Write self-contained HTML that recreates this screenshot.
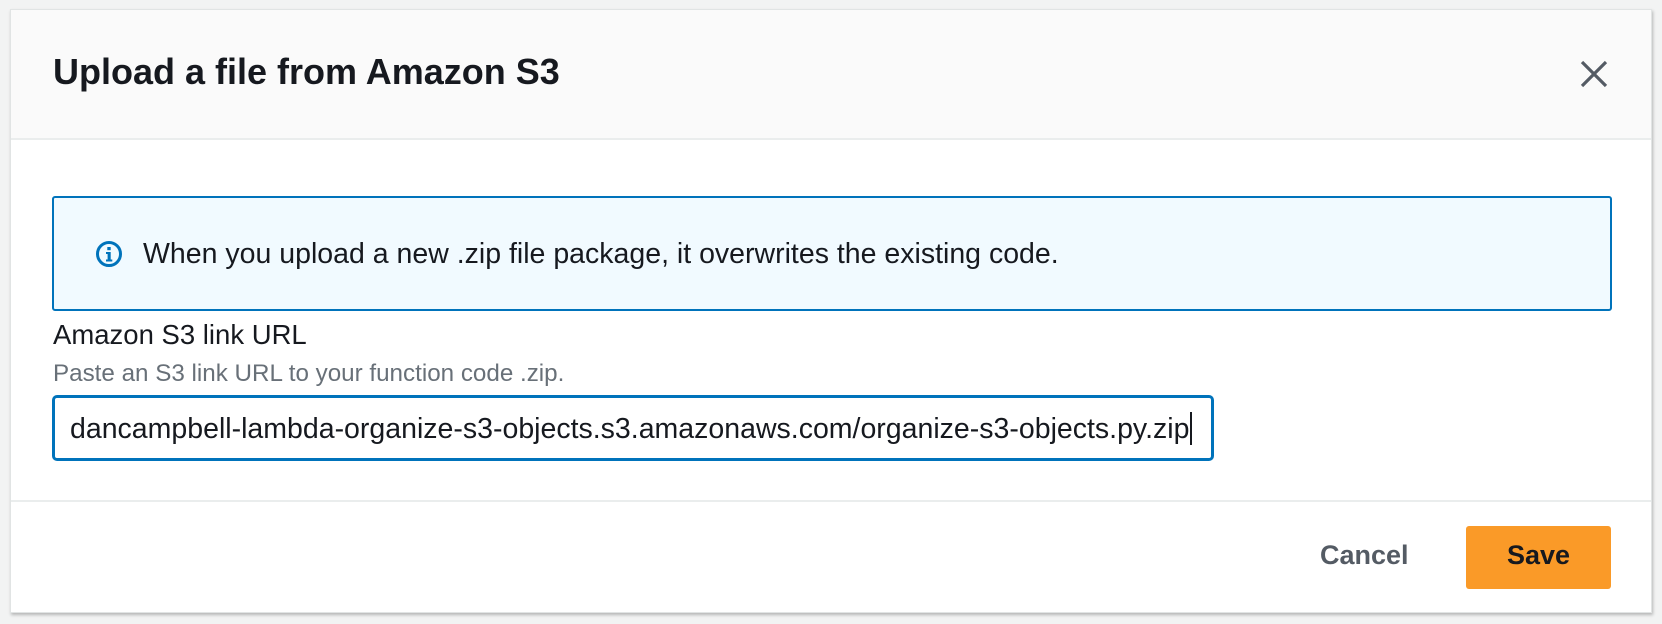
<!DOCTYPE html>
<html><head><meta charset="utf-8"><style>
html,body{margin:0;padding:0;width:1662px;height:624px;overflow:hidden;background:#f2f3f3;font-family:"Liberation Sans",sans-serif;}
.modal{position:absolute;left:10px;top:9px;width:1642px;height:604px;background:#fff;border:1px solid #e1e4e4;box-shadow:1px 2px 3px rgba(0,0,0,0.25);box-sizing:border-box;}
.hdr{position:absolute;left:0;top:0;right:0;height:128px;background:#fafafa;border-bottom:2px solid #eaeded;}
.t{position:absolute;white-space:nowrap;}
</style></head><body>
<div class="modal">
  <div class="hdr"></div>
  <div class="t" style="left:42px;top:41px;font-size:36px;font-weight:bold;color:#16191f;">Upload a file from Amazon S3</div>
  <svg style="position:absolute;left:1569px;top:50px" width="28" height="28" viewBox="0 0 28 28"><path d="M2 2L26 26M26 2L2 26" stroke="#545b64" stroke-width="3.2" fill="none"/></svg>
  <div style="position:absolute;left:41px;top:186px;width:1560px;height:115px;box-sizing:border-box;border:2px solid #0073bb;border-radius:3px;background:#f1faff;"></div>
  <svg style="position:absolute;left:84px;top:230px" width="28" height="28" viewBox="0 0 28 28"><circle cx="14" cy="14" r="11.5" stroke="#0073bb" stroke-width="3" fill="none"/><rect x="12.3" y="7" width="3.4" height="3.2" fill="#0073bb"/><path d="M11 12h4.7v7.5h1.6v2h-6.3v-2h1.6v-5.5h-1.6z" fill="#0073bb"/></svg>
  <div class="t" style="left:132px;top:228px;font-size:28.5px;color:#16191f;">When you upload a new .zip file package, it overwrites the existing code.</div>
  <div class="t" style="left:42px;top:309px;font-size:27.5px;color:#16191f;">Amazon S3 link URL</div>
  <div class="t" style="left:42px;top:350px;font-size:24.2px;color:#687078;">Paste an S3 link URL to your function code .zip.</div>
  <div style="position:absolute;left:41px;top:385px;width:1162px;height:66px;box-sizing:border-box;border:3px solid #0073bb;border-radius:5px;"></div>
  <div class="t" style="left:59px;top:402px;font-size:28.5px;color:#16191f;">dancampbell-lambda-organize-s3-objects.s3.amazonaws.com/organize-s3-objects.py.zip<span style="display:inline-block;width:1.5px;height:33px;background:#16191f;vertical-align:-7px;margin-left:1px"></span></div>
  <div style="position:absolute;left:0;right:0;top:490px;height:2px;background:#eaeded;"></div>
  <div class="t" style="left:1309px;top:530px;font-size:27px;font-weight:bold;color:#545b64;">Cancel</div>
  <div style="position:absolute;left:1455px;top:516px;width:145px;height:63px;background:#fa9a28;border-radius:3px;"></div>
  <div class="t" style="left:1455px;top:530px;width:145px;text-align:center;font-size:27px;font-weight:bold;color:#16191f;">Save</div>
</div>
</body></html>
